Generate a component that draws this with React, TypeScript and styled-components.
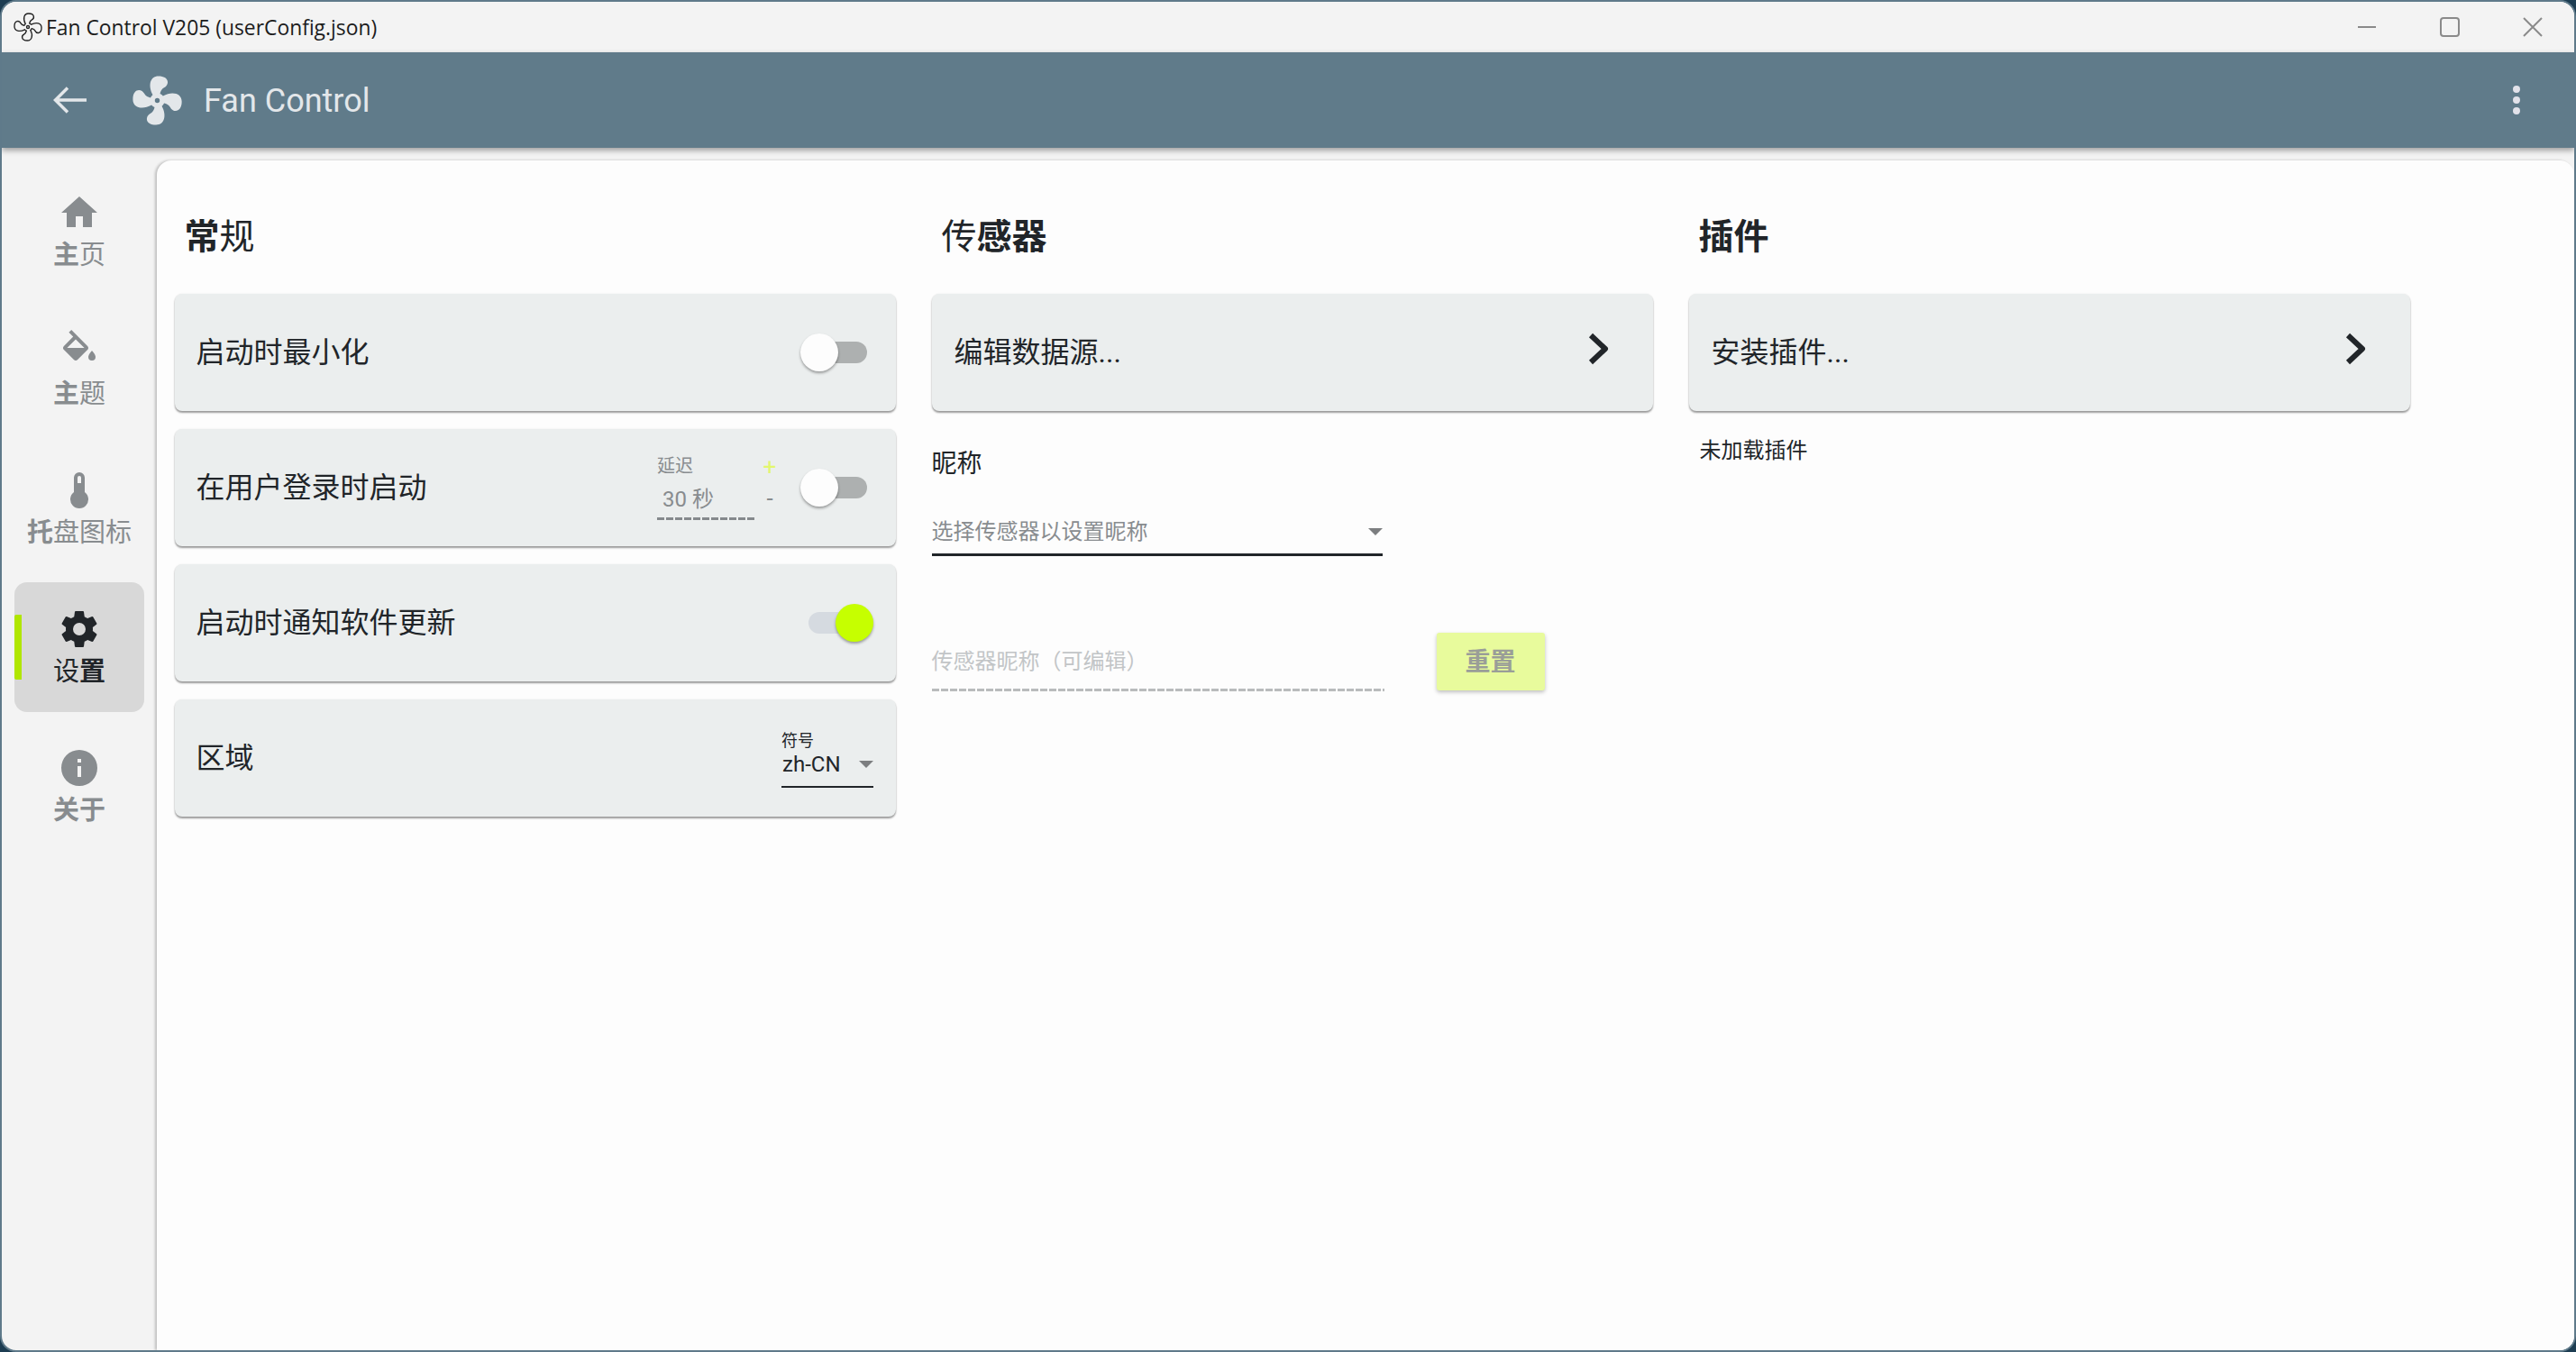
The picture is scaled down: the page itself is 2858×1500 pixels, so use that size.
import { ReactNode } from "react";
import { styled, createGlobalStyle } from "styled-components";

const GlobalStyle = createGlobalStyle`
  html, body {
    margin: 0;
    padding: 0;
    background: #1d3d52;
  }
  * {
    box-sizing: border-box;
  }
`;

const FONT = `Roboto, "Noto Sans CJK SC", sans-serif`;
const TEXT = "#212529";
const MUTED = "#888c8f";

const paths = {
  home: "M10,20V14H14V20H19V12H22L12,3L2,12H5V20H10Z",
  fill: "M19,11.5C19,11.5 17,13.67 17,15A2,2 0 0,0 19,17A2,2 0 0,0 21,15C21,13.67 19,11.5 19,11.5M5.21,10L10,5.21L14.79,10M16.56,8.94L7.62,0L6.21,1.41L8.59,3.79L3.44,8.94C2.85,9.5 2.85,10.47 3.44,11.06L8.94,16.56C9.23,16.85 9.62,17 10,17C10.38,17 10.77,16.85 11.06,16.56L16.56,11.06C17.15,10.47 17.15,9.5 16.56,8.94Z",
  thermometer:
    "M15 13V5A3 3 0 0 0 9 5V13A5 5 0 1 0 15 13M12 4A1 1 0 0 1 13 5V8H11V5A1 1 0 0 1 12 4Z",
  cog: "M12,15.5A3.5,3.5 0 0,1 8.5,12A3.5,3.5 0 0,1 12,8.5A3.5,3.5 0 0,1 15.5,12A3.5,3.5 0 0,1 12,15.5M19.43,12.97C19.47,12.65 19.5,12.33 19.5,12C19.5,11.67 19.47,11.34 19.43,11L21.54,9.37C21.73,9.22 21.78,8.95 21.66,8.73L19.66,5.27C19.54,5.05 19.27,4.96 19.05,5.05L16.56,6.05C16.04,5.66 15.5,5.32 14.87,5.07L14.5,2.42C14.46,2.18 14.25,2 14,2H10C9.75,2 9.54,2.18 9.5,2.42L9.13,5.07C8.5,5.32 7.96,5.66 7.44,6.05L4.95,5.05C4.73,4.96 4.46,5.05 4.34,5.27L2.34,8.73C2.21,8.95 2.27,9.22 2.46,9.37L4.57,11C4.53,11.34 4.5,11.67 4.5,12C4.5,12.33 4.53,12.65 4.57,12.97L2.46,14.63C2.27,14.78 2.21,15.05 2.34,15.27L4.34,18.73C4.46,18.95 4.73,19.03 4.95,18.95L7.44,17.94C7.96,18.34 8.5,18.68 9.13,18.93L9.5,21.58C9.54,21.82 9.75,22 10,22H14C14.25,22 14.46,21.82 14.5,21.58L14.87,18.93C15.5,18.67 16.04,18.34 16.56,17.94L19.05,18.95C19.27,19.03 19.54,18.95 19.66,18.73L21.66,15.27C21.78,15.05 21.73,14.78 21.54,14.63L19.43,12.97Z",
  info: "M13,9H11V7H13M13,17H11V11H13M12,2A10,10 0 0,0 2,12A10,10 0 0,0 12,22A10,10 0 0,0 22,12A10,10 0 0,0 12,2Z",
  fan: "M12,11A1,1 0 0,0 11,12A1,1 0 0,0 12,13A1,1 0 0,0 13,12A1,1 0 0,0 12,11M12.5,2C17,2 17.11,5.57 14.75,6.75C13.76,7.24 13.32,8.29 13.13,9.22C13.61,9.42 14.03,9.73 14.35,10.13C18.05,8.13 22.03,8.92 22.03,12.5C22.03,17 18.46,17.1 17.28,14.73C16.78,13.74 15.72,13.3 14.79,13.11C14.59,13.59 14.28,14 13.88,14.34C15.87,18.03 15.08,22 11.5,22C7,22 6.91,18.42 9.27,17.24C10.25,16.75 10.69,15.71 10.89,14.79C10.4,14.59 9.97,14.27 9.65,13.87C5.96,15.85 2,15.07 2,11.5C2,7 5.56,6.89 6.74,9.26C7.24,10.25 8.29,10.68 9.22,10.87C9.41,10.39 9.73,9.97 10.14,9.65C8.15,5.96 8.94,2 12.5,2Z",
};

const Window = styled.div`
  width: 2858px;
  height: 1500px;
  display: flex;
  flex-direction: column;
  overflow: hidden;
  border: 2px solid #5f7a8a;
  border-radius: 18px;
  background: #f3f3f3;
  font-family: ${FONT};
  color: ${TEXT};
`;

const TitleBar = styled.div`
  height: 56px;
  flex: none;
  display: flex;
  align-items: center;
  padding-left: 11px;
  background: #f3f3f3;
`;

const TitleIcon = styled.svg`
  width: 36px;
  height: 36px;
  margin-right: 2px;
`;

const TitleText = styled.div`
  flex: 1;
  font-family: "Open Sans", sans-serif;
  font-size: 22.85px;
  color: #1c1c1c;
`;

const WindowButton = styled.div`
  width: 92px;
  height: 56px;
  display: flex;
  align-items: center;
  justify-content: center;
  svg {
    width: 22px;
    height: 22px;
    fill: none;
    stroke: #8a8a8a;
    stroke-width: 2;
  }
`;

const AppBar = styled.div`
  position: relative;
  z-index: 2;
  height: 106px;
  flex: none;
  display: flex;
  align-items: center;
  padding: 0 60px 0 57px;
  background: #607b8a;
  box-shadow: 0 3px 6px rgba(0, 0, 0, 0.35);
  color: #e3e7ea;
`;

const BackArrow = styled.svg`
  width: 37px;
  height: 30px;
  margin-right: 46px;
  fill: none;
  stroke: #e3e7ea;
  stroke-width: 3.5;
`;

const AppLogo = styled.svg`
  width: 65px;
  height: 65px;
  margin-right: 19px;
  fill: #e3e7ea;
`;

const AppName = styled.div`
  flex: 1;
  padding-top: 2px;
  font-size: 36px;
`;

const MoreDots = styled.svg`
  width: 8px;
  height: 32px;
  fill: #e2e2ea;
`;

const Body = styled.div`
  flex: 1;
  display: flex;
  min-height: 0;
`;

const Sidebar = styled.nav`
  width: 172px;
  flex: none;
  display: flex;
  flex-direction: column;
  gap: 10px;
  padding: 20px 14px 0 14px;
`;

const NavItem = styled.div<{ $active?: boolean }>`
  position: relative;
  height: 144px;
  display: flex;
  flex-direction: column;
  align-items: center;
  padding-top: 28px;
  border-radius: 14px;
  background: ${(p) => (p.$active ? "#d8d8d8" : "transparent")};
  color: ${(p) => (p.$active ? TEXT : MUTED)};
`;

const NavIndicator = styled.div`
  position: absolute;
  left: 0;
  top: 36px;
  width: 8px;
  height: 72px;
  background: #b0e600;
  border-radius: 2px 0 0 2px;
`;

const NavIcon = styled.svg`
  width: 48px;
  height: 48px;
  flex: none;
  fill: currentColor;
`;

const NavLabel = styled.div`
  padding-top: 2px;
  font-size: 29px;
  line-height: 42px;
  white-space: nowrap;
`;

const Heavy = styled.b`
  font-weight: 700;
`;

const Content = styled.main`
  flex: 1;
  margin-top: 14px;
  padding: 51px 0 0 19.5px;
  background: #fdfdfd;
  border-radius: 16px 16px 0 0;
  box-shadow: -2px 0 3px rgba(0, 0, 0, 0.22);
`;

const Columns = styled.div`
  display: grid;
  grid-template-columns: repeat(3, 800.5px);
  column-gap: 39.5px;
`;

const Column = styled.section`
  display: flex;
  flex-direction: column;
  align-items: flex-start;
`;

const Heading = styled.h2`
  margin: 0 0 31px;
  padding: 2px 0 0 11px;
  font-size: 39px;
  line-height: 64px;
  font-weight: 400;
`;

const CardList = styled.div`
  display: flex;
  flex-direction: column;
  gap: 20px;
  width: 100%;
`;

const Card = styled.div<{ $wide?: boolean }>`
  width: 100%;
  height: 130px;
  flex: none;
  display: flex;
  align-items: center;
  padding: 0 ${(p) => (p.$wide ? "49px" : "25px")} 0 ${(p) => (p.$wide ? "25px" : "24px")};
  background: #ebeeee;
  border-radius: 8px;
  box-shadow:
    0 2px 2px rgba(0, 0, 0, 0.38),
    0 0 2px rgba(0, 0, 0, 0.08);
`;

const CardLabel = styled.div`
  flex: 1;
  padding-bottom: 7px;
  font-size: 32px;
`;

const Chevron = styled.svg`
  width: 23px;
  height: 36px;
  margin-bottom: 9px;
  fill: none;
  stroke: ${TEXT};
  stroke-width: 6;
  stroke-linejoin: round;
`;

const ToggleRoot = styled.div`
  position: relative;
  width: 81px;
  height: 42px;
  flex: none;
`;

const ToggleTrack = styled.div<{ $on?: boolean }>`
  position: absolute;
  left: 9px;
  top: 9px;
  width: 65px;
  height: 24px;
  border-radius: 12px;
  background: ${(p) => (p.$on ? "#d5dae0" : "#adb0b0")};
`;

const ToggleThumb = styled.div<{ $on?: boolean }>`
  position: absolute;
  left: ${(p) => (p.$on ? "39px" : "0")};
  top: 0;
  width: 42px;
  height: 42px;
  border-radius: 50%;
  background: ${(p) => (p.$on ? "#c6ff00" : "#fdfdfd")};
  box-shadow: 0 2px 3px rgba(0, 0, 0, 0.35);
`;

const DelayField = styled.div`
  width: 110px;
  margin-top: 6px;
  flex: none;
`;

const DelayLabel = styled.div`
  font-size: 20px;
  line-height: 24px;
  color: ${MUTED};
`;

const DelayValue = styled.div`
  margin-top: 5px;
  padding-left: 6px;
  font-size: 24px;
  line-height: 40px;
  color: ${MUTED};
`;

const DashedLine = styled.div<{ $color: string }>`
  height: 3px;
  background: repeating-linear-gradient(
    90deg,
    ${(p) => p.$color} 0 8px,
    transparent 8px 10px
  );
`;

const DelaySpacer = styled.div`
  height: 6px;
`;

const Stepper = styled.div`
  width: 30px;
  margin-right: 19px;
  margin-bottom: 11px;
  flex: none;
  display: flex;
  flex-direction: column;
  align-items: center;
  gap: 3px;
  font-size: 26px;
  line-height: 32px;
`;

const StepUp = styled.div`
  color: #e2f76e;
`;

const StepDown = styled.div`
  color: ${MUTED};
`;

const SmallSelect = styled.div`
  width: 102px;
  flex: none;
  padding-top: 4px;
  margin-top: -2px;
  border-bottom: 2px solid ${TEXT};
`;

const SmallSelectLabel = styled.div`
  font-size: 18px;
  line-height: 24px;
`;

const SmallSelectValue = styled.div`
  display: flex;
  align-items: center;
  justify-content: space-between;
  height: 28px;
  margin-bottom: 10px;
  padding-left: 1px;
  font-size: 24px;
`;

const Caret = styled.svg`
  width: 16px;
  height: 8px;
  fill: #7c7e80;
`;

const NickTitle = styled.div`
  margin-top: 39px;
  font-size: 28px;
  line-height: 40px;
`;

const NickSelect = styled.div`
  width: 500px;
  margin-top: 35px;
  padding-bottom: 4px;
  display: flex;
  align-items: center;
  justify-content: space-between;
  border-bottom: 3px solid ${TEXT};
  font-size: 24px;
  line-height: 40px;
  color: ${MUTED};
`;

const NickRow = styled.div`
  margin-top: 85px;
  display: flex;
  align-items: flex-start;
  gap: 58px;
`;

const NickField = styled.div`
  width: 502px;
  padding-top: 12px;
`;

const NickPlaceholder = styled.div`
  margin-bottom: 10px;
  font-size: 24px;
  line-height: 40px;
  color: #c2c5c7;
`;

const ResetButton = styled.button`
  width: 120px;
  height: 64px;
  padding: 0 0 5px;
  border: 0;
  border-radius: 3px;
  background: #e8fb9c;
  box-shadow: 0 2px 4px rgba(0, 0, 0, 0.25);
  font-family: ${FONT};
  font-size: 28px;
  font-weight: 700;
  color: #9a9e98;
`;

const PluginNote = styled.div`
  margin-top: 24px;
  padding-left: 12px;
  font-size: 24px;
  line-height: 40px;
`;

type NavEntry = { icon: string; label: ReactNode; active?: boolean };

const navItems: NavEntry[] = [
  { icon: paths.home, label: (<><Heavy>主</Heavy>页</>) },
  { icon: paths.fill, label: (<><Heavy>主</Heavy>题</>) },
  { icon: paths.thermometer, label: (<><Heavy>托</Heavy>盘图标</>) },
  { icon: paths.cog, label: (<>设<Heavy>置</Heavy></>), active: true },
  { icon: paths.info, label: (<Heavy>关于</Heavy>) },
];

function Toggle({ on }: { on?: boolean }) {
  return (
    <ToggleRoot>
      <ToggleTrack $on={on} />
      <ToggleThumb $on={on} />
    </ToggleRoot>
  );
}

function CaretIcon() {
  return (
    <Caret viewBox="0 0 16 8">
      <path d="M0 0H16L8 8Z" />
    </Caret>
  );
}

function ChevronIcon() {
  return (
    <Chevron viewBox="0 0 23 36">
      <path d="M3 3L19 18L3 33" />
    </Chevron>
  );
}

export default function App() {
  return (
    <>
      <GlobalStyle />
      <Window>
        <TitleBar>
          <TitleIcon viewBox="0 0 24 24">
            <path d={paths.fan} fill="none" stroke="#222" strokeWidth="0.9" />
          </TitleIcon>
          <TitleText>Fan Control V205 (userConfig.json)</TitleText>
          <WindowButton>
            <svg viewBox="0 0 22 22">
              <path d="M1 11H21" />
            </svg>
          </WindowButton>
          <WindowButton>
            <svg viewBox="0 0 22 22">
              <rect x="1" y="1" width="20" height="20" rx="3" />
            </svg>
          </WindowButton>
          <WindowButton>
            <svg viewBox="0 0 22 22">
              <path d="M1 1L21 21M21 1L1 21" />
            </svg>
          </WindowButton>
        </TitleBar>

        <AppBar>
          <BackArrow viewBox="0 0 37 30">
            <path d="M37 15H3M16 1.5L2.5 15L16 28.5" />
          </BackArrow>
          <AppLogo viewBox="0 0 24 24">
            <path d={paths.fan} />
          </AppLogo>
          <AppName>Fan Control</AppName>
          <MoreDots viewBox="0 0 8 32">
            <circle cx="4" cy="4" r="4" />
            <circle cx="4" cy="16" r="4" />
            <circle cx="4" cy="28" r="4" />
          </MoreDots>
        </AppBar>

        <Body>
          <Sidebar>
            {navItems.map((item) => (
              <NavItem key={item.icon} $active={item.active}>
                {item.active ? <NavIndicator /> : null}
                <NavIcon viewBox="0 0 24 24">
                  <path d={item.icon} />
                </NavIcon>
                <NavLabel>{item.label}</NavLabel>
              </NavItem>
            ))}
          </Sidebar>

          <Content>
            <Columns>
              <Column>
                <Heading>
                  <Heavy>常</Heavy>规
                </Heading>
                <CardList>
                  <Card>
                    <CardLabel>启动时最小化</CardLabel>
                    <Toggle />
                  </Card>
                  <Card>
                    <CardLabel>在用户登录时启动</CardLabel>
                    <DelayField>
                      <DelayLabel>延迟</DelayLabel>
                      <DelayValue>30 秒</DelayValue>
                      <DashedLine $color="#85898c" />
                      <DelaySpacer />
                    </DelayField>
                    <Stepper>
                      <StepUp>+</StepUp>
                      <StepDown>-</StepDown>
                    </Stepper>
                    <Toggle />
                  </Card>
                  <Card>
                    <CardLabel>启动时通知软件更新</CardLabel>
                    <Toggle on />
                  </Card>
                  <Card>
                    <CardLabel>区域</CardLabel>
                    <SmallSelect>
                      <SmallSelectLabel>符号</SmallSelectLabel>
                      <SmallSelectValue>
                        zh-CN
                        <CaretIcon />
                      </SmallSelectValue>
                    </SmallSelect>
                  </Card>
                </CardList>
              </Column>

              <Column>
                <Heading>
                  传<Heavy>感器</Heavy>
                </Heading>
                <Card $wide>
                  <CardLabel>编辑数据源...</CardLabel>
                  <ChevronIcon />
                </Card>
                <NickTitle>昵称</NickTitle>
                <NickSelect>
                  选择传感器以设置昵称
                  <CaretIcon />
                </NickSelect>
                <NickRow>
                  <NickField>
                    <NickPlaceholder>传感器昵称（可编辑）</NickPlaceholder>
                    <DashedLine $color="#b9bbbc" />
                  </NickField>
                  <ResetButton>重置</ResetButton>
                </NickRow>
              </Column>

              <Column>
                <Heading>
                  <Heavy>插件</Heavy>
                </Heading>
                <Card $wide>
                  <CardLabel>安装插件...</CardLabel>
                  <ChevronIcon />
                </Card>
                <PluginNote>未加载插件</PluginNote>
              </Column>
            </Columns>
          </Content>
        </Body>
      </Window>
    </>
  );
}
